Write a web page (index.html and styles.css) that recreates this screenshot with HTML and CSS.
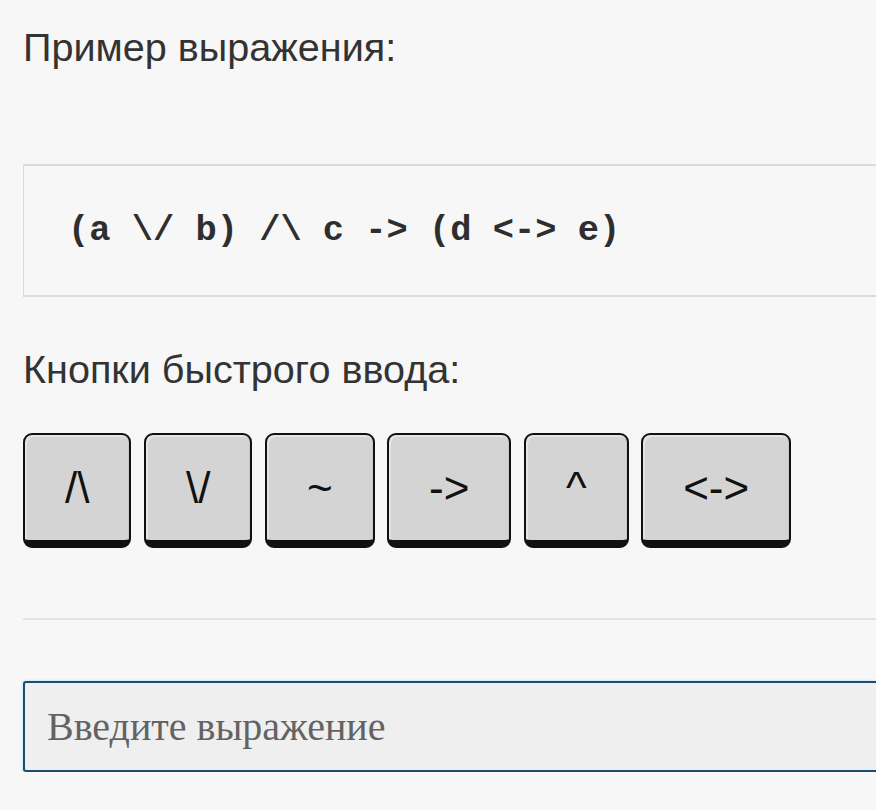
FILE: index.html
```html
<!DOCTYPE html>
<html lang="ru">
<head>
<meta charset="utf-8">
<title>Пример выражения</title>
<link rel="stylesheet" href="styles.css">
</head>
<body>
<div class="page">
  <div class="title title-first">Пример выражения:</div>
  <pre class="example">(a \/ b) /\ c -&gt; (d &lt;-&gt; e)</pre>
  <div class="title title-second">Кнопки быстрого ввода:</div>
  <div class="keys">
    <button class="key" type="button">/\</button>
    <button class="key" type="button">\/</button>
    <button class="key" type="button">~</button>
    <button class="key" type="button">-&gt;</button>
    <button class="key" type="button">^</button>
    <button class="key" type="button">&lt;-&gt;</button>
  </div>
  <hr class="divider">
  <input class="expr-input" type="text" placeholder="Введите выражение">
</div>
</body>
</html>
```

FILE: styles.css
```css
html, body {
  margin: 0;
  padding: 0;
  background: #f7f7f7;
  overflow: hidden;
}

.page {
  padding-left: 23px;
  margin-right: -40px;
  display: flex;
  flex-direction: column;
  align-items: stretch;
}

.title {
  font-family: "Liberation Sans", Arial, sans-serif;
  font-size: 39.6px;
  line-height: 45px;
  color: #333;
}

.title-first {
  margin-top: 25px;
}

.example {
  margin: 94px 0 0 0;
  box-sizing: content-box;
  height: 129px;
  border: 1px solid #dadada;
  border-top-width: 2px;
  border-bottom-width: 2px;
  border-right: none;
  padding: 0 0 0 44px;
  display: flex;
  align-items: center;
  font-family: "Liberation Mono", "Courier New", monospace;
  font-weight: bold;
  font-size: 35.4px;
  line-height: 40px;
  color: #2e2e2e;
  background: #f7f7f7;
}

.title-second {
  margin-top: 50px;
}

.keys {
  display: flex;
  gap: 12.5px;
  margin-top: 41px;
}

.key {
  height: 115px;
  box-sizing: border-box;
  padding: 0 40px;
  border: 2px solid #111;
  border-bottom-width: 8px;
  border-radius: 9px;
  background: #d4d4d4;
  box-shadow: inset 2px 2px 0 #e4e4e4, inset -1px 0 0 #c8c8c8;
  font-family: "Liberation Sans", Arial, sans-serif;
  font-size: 44px;
  line-height: 1;
  color: #111;
  display: flex;
  align-items: center;
  justify-content: center;
}

.divider {
  margin: 70px 0 0 0;
  border: none;
  height: 2px;
  background: #e3e3e3;
}

.expr-input {
  margin-top: 61px;
  height: 91px;
  box-sizing: border-box;
  border: 2px solid #1b4c72;
  border-right: none;
  border-radius: 3px 0 0 3px;
  background: #efefef;
  box-shadow: 0 0 2px 1px #cdeaf4;
  padding: 0 0 0 22px;
  font-family: "Liberation Serif", "Times New Roman", serif;
  font-size: 40px;
  color: #333;
  outline: none;
}

.expr-input::placeholder {
  color: #636363;
}
```
